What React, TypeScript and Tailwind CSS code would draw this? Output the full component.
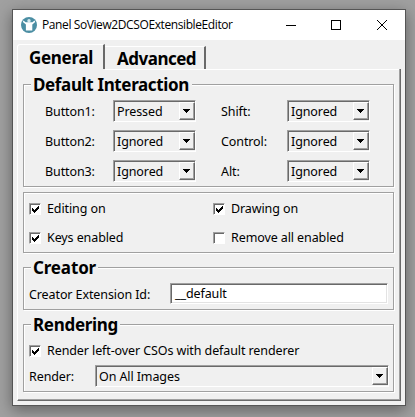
import type { ReactNode } from "react";

const etched =
  "border border-[#a0a0a0] shadow-[inset_1px_1px_0_#fff,1px_1px_0_#fff]";

function Group({ title, titleWidth, className, children }: { title?: string; titleWidth?: string; className: string; children: ReactNode }) {
  return (
    <section className={`relative ml-[5px] w-[371px] shrink-0 ${etched} ${className}`}>
      {title && (
        <h2 className={`absolute -top-[12px] left-[7px] h-6 whitespace-nowrap bg-[#f0f0f0] pl-[2px] text-[17px] leading-[23px] font-bold ${titleWidth}`}>{title}</h2>
      )}
      {children}
    </section>
  );
}

function Select({ value, className }: { value: string; className: string }) {
  return (
    <div className={`flex h-[22px] shrink-0 border border-t-[#a0a0a0] border-r-white border-b-white border-l-[#a0a0a0] ${className}`}>
      <div className="flex min-w-0 flex-1 border-t border-l border-[#696969]">
        <span className="flex-1 pl-[2px] leading-[19px] whitespace-nowrap">{value}</span>
        <span className="flex h-[18px] w-4 items-center justify-center border border-t-white border-r-[#696969] border-b-[#696969] border-l-white pr-px shadow-[inset_-1px_-1px_0_#a0a0a0]">
          <svg width="7" height="4" viewBox="0 0 7 4" shapeRendering="crispEdges"><path d="M0 0h7v1H6v1H5v1H4v1H3V3H2V2H1V1H0z" /></svg>
        </span>
      </div>
    </div>
  );
}

function Check({ label, checked = true, className = "" }: { label: string; checked?: boolean; className?: string }) {
  return (
    <div className={`flex h-[13px] items-center ${className}`}>
      <span className="mr-[6px] h-3 w-3 shrink-0 border border-t-[#a0a0a0] border-r-white border-b-white border-l-[#a0a0a0] bg-white shadow-[inset_1px_1px_0_#696969]">
        {checked && (
          <svg width="10" height="10" viewBox="0 0 10 10" shapeRendering="crispEdges"><path d="M2 4h1v1h1v1h1V5h1V4h1V3h1V2h1v3H8v1H7v1H6v1H5v1H4V8H3V7H2z" /></svg>
        )}
      </span>
      <span className="pt-[2px] whitespace-nowrap">{label}</span>
    </div>
  );
}

const rows = [
  ["Button1:", "Pressed", "Shift:", "Ignored"],
  ["Button2:", "Ignored", "Control:", "Ignored"],
  ["Button3:", "Ignored", "Alt:", "Ignored"],
];

export default function App() {
  return (
    <div className="h-[417px] w-[415px] overflow-hidden bg-[#a0a0a0] pt-[9px] pl-3 font-['Noto_Sans',sans-serif] text-[12.5px] tracking-[-0.1px] text-black">
      <main className="flex h-[397px] w-[394px] flex-col border border-[#555] bg-[#f0f0f0] shadow-[0_4px_14px_rgba(0,0,0,0.4)]">
        <header className="flex h-[30px] shrink-0 items-center bg-white pl-2 font-['Open_Sans',sans-serif] text-[12px] tracking-[-0.4px]">
          <svg width="16" height="16" viewBox="0 0 16 16">
            <circle cx="8" cy="8" r="8" fill="#4b8ea3" />
            <circle cx="8" cy="3.8" r="1.7" fill="#d6eaef" />
            <path d="M2.4 3.6 4.6 5.2h6.8l2.2-1.6.6 1.5-2.9 2.4V13.6H4.9V7.5L1.9 5.1z" fill="#fff" />
          </svg>
          <span className="ml-[5px] w-[207px] whitespace-nowrap">Panel SoView2DCSOExtensibleEditor</span>
          <svg className="ml-[37px] shrink-0" width="103" height="12" viewBox="0 0 103 12" fill="none" stroke="#000">
            <path d="M0 6.5h10M45.5 1.5h9v9h-9z" shapeRendering="crispEdges" />
            <path d="m91 1 10 10m0-10L91 11" />
          </svg>
        </header>
        <nav className="flex h-[29px] shrink-0 items-end pl-1 text-[17px] font-bold">
          <div className="h-[25px] w-[88px] rounded-tl-[3px] border-t border-r-2 border-l border-t-white border-r-[#696969] border-l-white pl-[11px] leading-[25px] tracking-[-0.3px]">General</div>
          <div className="h-[23px] w-[101px] border-t border-r-2 border-t-white border-r-[#696969] pl-3 leading-[23px] tracking-[-0.5px]">Advanced</div>
        </nav>
        <div className="ml-1 flex h-[332px] w-[384px] flex-col border-r border-b border-l border-r-[#696969] border-b-[#696969] border-l-white shadow-[inset_-1px_-1px_0_#a0a0a0]">
          <div className="ml-[87px] h-px w-[294px] shrink-0 bg-white" />
          <Group title="Default Interaction" titleWidth="w-[161px] tracking-[-0.36px]" className="mt-[14px] h-[103px] pt-[15px]">
            <div className="flex flex-col gap-2">
              {rows.map((r) => (
                <div key={r[0]} className="flex leading-[23px]">
                  <span className="ml-[21px] h-[22px] w-[68px]">{r[0]}</span>
                  <Select value={r[1]} className="w-[83px]" />
                  <span className="ml-[25px] h-[22px] w-[66px]">{r[2]}</span>
                  <Select value={r[3]} className="w-[83px]" />
                </div>
              ))}
            </div>
          </Group>
          <Group className="mt-[5px] h-[61px] pt-[9px] pl-[5px]">
            <div className="grid grid-cols-[184px_1fr] gap-y-4">
              <Check label="Editing on" />
              <Check label="Drawing on" />
              <Check label="Keys enabled" />
              <Check label="Remove all enabled" checked={false} />
            </div>
          </Group>
          <Group title="Creator" titleWidth="w-[67px] tracking-[-0.15px]" className="mt-[14px] h-[43px] pt-[15px]">
            <div className="flex">
              <span className="ml-[5px] w-[141px] leading-[23px]">Creator Extension Id:</span>
              <div className="h-[21px] w-[218px] border border-t-[#a0a0a0] border-r-white border-b-white border-l-[#a0a0a0] bg-white pl-1 leading-[20px] shadow-[inset_1px_1px_0_#696969,inset_-1px_-1px_0_#e3e3e3]">__default</div>
            </div>
          </Group>
          <Group title="Rendering" titleWidth="w-[89px] tracking-[-0.3px]" className="mt-[14px] h-[68px] pt-[19px]">
            <Check label="Render left-over CSOs with default renderer" className="ml-[5px]" />
            <div className="mt-[8px] flex">
              <span className="ml-[5px] w-[66px] leading-[23px]">Render:</span>
              <Select value="On All Images" className="w-[294px]" />
            </div>
          </Group>
        </div>
      </main>
    </div>
  );
}
